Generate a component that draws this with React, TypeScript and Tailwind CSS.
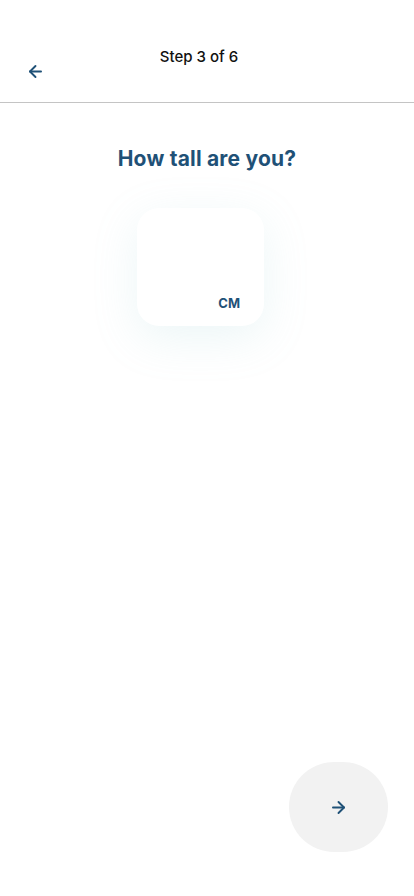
import { ArrowLeft, ArrowRight } from "lucide-react";

const App = () => {
  return (
    <main
      className="flex flex-col w-full h-[896px] bg-white relative"
      style={{ fontFamily: "Inter, 'Noto Sans', sans-serif" }}
    >
      {/* header */}
      <header className="flex flex-col w-full h-[103px] border-b border-[#c4c4c4]">
        <p className="text-center text-[15px] font-medium text-[#111] pt-[47px] pr-[16px] leading-5">Step 3 of 6</p>
        <button className="ml-[26px] mt-[-5px] w-[20px] text-[#1f5177]">
          <ArrowLeft size={19} strokeWidth={2.4} />
        </button>
      </header>

      <h1 className="text-center text-[21px] font-bold text-[#1f5177] mt-[44px] leading-6 tracking-[0.2px]">
        How tall are you?
      </h1>

      <div className="flex justify-center mt-[37px]">
        <div className="flex items-end justify-end w-[127px] h-[118px] ml-[-13px] rounded-[22px] bg-white shadow-[0_12px_45px_rgba(140,200,210,0.17)] pr-[24px] pb-[15px]">
          <span className="text-[13px] font-bold text-[#1f5177] leading-4">CM</span>
        </div>
      </div>

      <div className="flex-1" />

      <div className="flex justify-end pr-[26px] pb-[44px]">
        <button className="flex items-center justify-center w-[99px] h-[90px] rounded-full bg-[#f2f2f2] text-[#1f5177]">
          <ArrowRight size={19} strokeWidth={2.4} />
        </button>
      </div>
    </main>
  );
};

export default App;
